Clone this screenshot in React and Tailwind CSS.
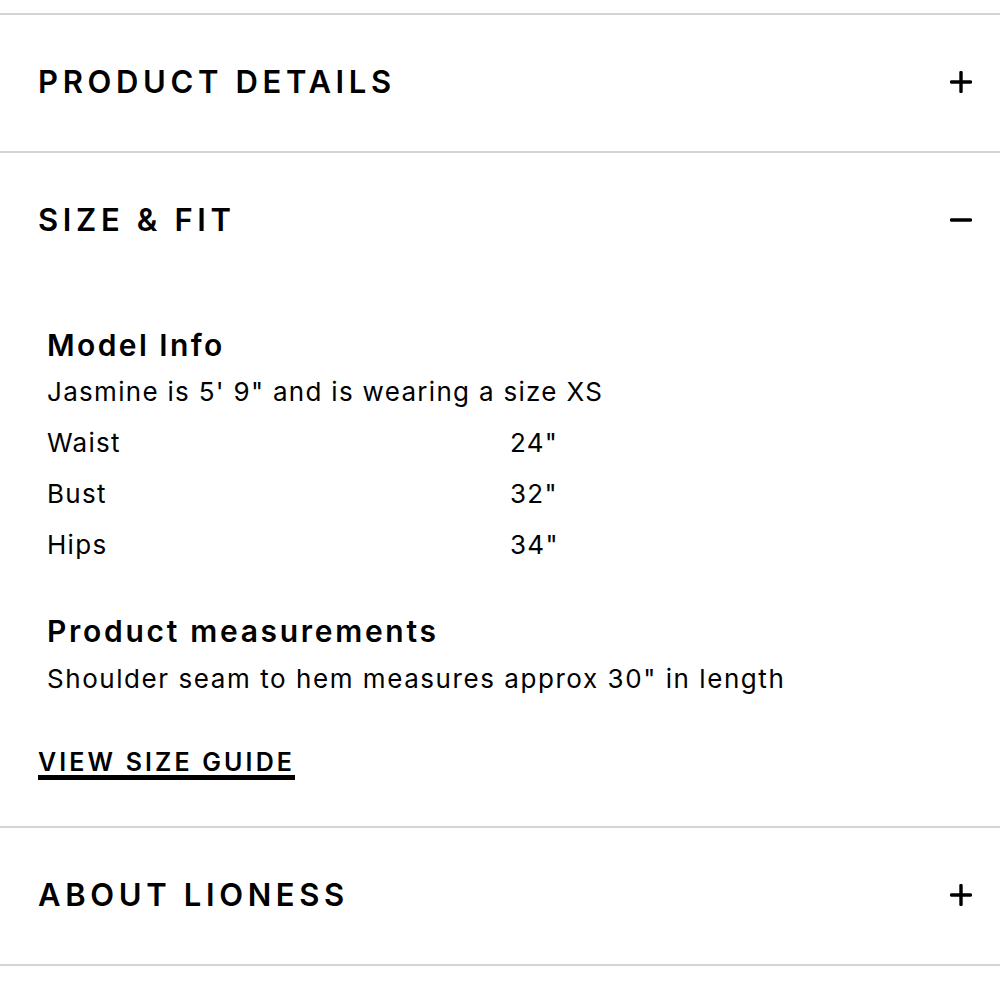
import React, { useState } from 'react';

const font = { fontFamily: '"Inter", "Liberation Sans", sans-serif' };

function Header({ title, open, onToggle }) {
  return (
    <button
      type="button"
      onClick={onToggle}
      className="flex w-full h-[136px] items-center justify-between pl-[38px] pr-[28px] pb-[3px] text-left"
    >
      <span className="text-[31px] font-semibold tracking-[0.15em] text-black leading-none">{title}</span>
      <svg width="22" height="22" viewBox="0 0 22 22" className="shrink-0">
        <path d="M1.5 11h19" stroke="black" strokeWidth="3.4" strokeLinecap="round" />
        {!open && <path d="M11 1.5v19" stroke="black" strokeWidth="3.4" strokeLinecap="round" />}
      </svg>
    </button>
  );
}

const rows = [
  ['Waist', '24"'],
  ['Bust', '32"'],
  ['Hips', '34"'],
];

export default function App() {
  const [open, setOpen] = useState({ details: false, size: true, about: false });
  const toggle = (k) => setOpen({ ...open, [k]: !open[k] });

  return (
    <div className="w-[1000px] bg-white pt-[13px]" style={font}>
      <div className="border-t-2 border-[#d4d4d4]">
        <Header title="PRODUCT DETAILS" open={open.details} onToggle={() => toggle('details')} />
      </div>
      <div className="border-t-2 border-[#d4d4d4]">
        <Header title="SIZE & FIT" open={open.size} onToggle={() => toggle('size')} />
        {open.size && (
          <div className="pb-[46px]">
            <div className="pl-[47px] pt-[36px] text-black">
              <h3 className="text-[30px] font-semibold tracking-[0.08em] leading-[40px]">Model Info</h3>
              <p className="text-[26px] tracking-[0.05em] leading-[40px] mt-[7px]">Jasmine is 5' 9" and is wearing a size XS</p>
              <div className="mt-[11px] flex flex-col gap-[11px]">
                {rows.map(([k, v]) => (
                  <div key={k} className="flex text-[26px] tracking-[0.05em] leading-[40px]">
                    <span className="w-[463px]">{k}</span>
                    <span>{v}</span>
                  </div>
                ))}
              </div>
              <h3 className="mt-[46px] text-[30px] font-semibold tracking-[0.09em] leading-[40px]">Product measurements</h3>
              <p className="text-[26px] tracking-[0.06em] leading-[40px] mt-[8px]">Shoulder seam to hem measures approx 30" in length</p>
            </div>
            <a
              href="#"
              className="ml-[38px] mt-[50px] inline-block text-[25px] font-semibold tracking-[0.125em] leading-[26px] text-black border-b-[5px] border-black"
            >
              VIEW SIZE GUIDE
            </a>
          </div>
        )}
      </div>
      <div className="border-t-2 border-[#d4d4d4]">
        <Header title="ABOUT LIONESS" open={open.about} onToggle={() => toggle('about')} />
      </div>
      <div className="border-t-2 border-[#d4d4d4] h-[40px]" />
    </div>
  );
}
